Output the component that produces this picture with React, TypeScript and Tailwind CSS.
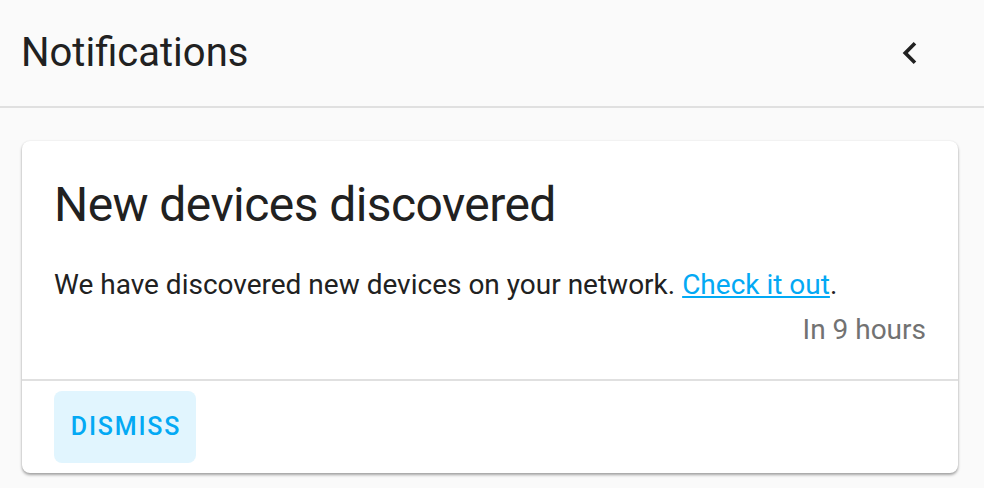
import React from "react";

export default function App() {
  return (
    <div
      className="w-[984px] h-[488px] bg-[#fafafa] overflow-hidden flex flex-col"
      style={{ fontFamily: "Roboto, 'Noto Sans', sans-serif" }}
    >
      <div className="h-[108px] shrink-0 flex items-center justify-between pl-[21px] pr-[52px] border-b-2 border-[#e0e0e0] bg-[#fafafa]">
        <div className="text-[40px] text-[#212121] leading-none">Notifications</div>
        <svg width="44" height="44" viewBox="0 0 24 24" className="text-[#212121]">
          <path fill="currentColor" d="M15.41,16.58L10.83,12L15.41,7.41L14,6L8,12L14,18L15.41,16.58Z" />
        </svg>
      </div>
      <div className="pt-[33px] pl-[22px] pr-[26px]">
        <div className="bg-white rounded-[8px] shadow-[0_2px_3px_rgba(0,0,0,0.35),0_0_2px_rgba(0,0,0,0.08)]">
          <div className="px-[32px] pt-[32px] pb-[29px]">
            <div className="text-[48px] leading-[64px] tracking-[-0.012em] text-[#212121]">New devices discovered</div>
            <div className="mt-[28px] text-[28px] leading-[40px] text-[#212121]">
              We have discovered new devices on your network.{" "}
              <span className="text-[#03a9f4] underline">Check it out</span>.
            </div>
            <div className="mt-[5px] text-right text-[28px] leading-[40px] text-[#727272]">In 9 hours</div>
          </div>
          <div className="border-t-2 border-[#e0e0e0] px-[32px] py-[10px]">
            <div className="w-[142px] h-[72px] rounded-[8px] bg-[#e1f5fe] flex items-center justify-center pl-[2px] text-[#03a9f4] text-[25px] font-medium tracking-[1.8px]">
              DISMISS
            </div>
          </div>
        </div>
      </div>
    </div>
  );
}
